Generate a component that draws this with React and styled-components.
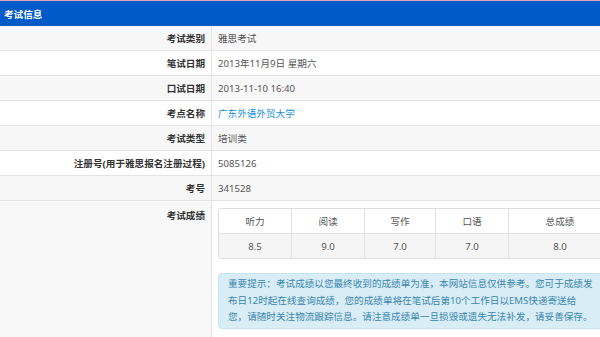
import React from 'react';
import styled, { createGlobalStyle } from 'styled-components';

const GlobalStyle = createGlobalStyle`
    html, body {
        margin: 0;
        padding: 0;
        background: #ffffff;
        overflow: hidden;
    }
    body {
        font-family: "Noto Sans", "Noto Sans CJK SC", sans-serif;
        font-size: 9.6px;
        color: #555;
    }
`;

export const Page = styled.div`
    width: 600px;
    height: 337px;
    overflow: hidden;
    border-top: 1px solid #d9a6b8;
    box-sizing: border-box;
`;

export const Header = styled.div`
    height: 25px;
    background: #005bc8;
    color: #ffffff;
    font-weight: bold;
    display: flex;
    align-items: center;
    padding-left: 4px;
`;

export const Row = styled.div`
    display: flex;
    min-height: 24px;
    border-bottom: 1px solid #e4e4e4;
    background: ${(p) => (p.$striped ? '#f7f7f7' : '#ffffff')};
`;

export const Label = styled.div`
    width: 212px;
    flex-shrink: 0;
    box-sizing: border-box;
    border-right: 1px solid #e4e4e4;
    padding-right: 6px;
    text-align: right;
    font-weight: bold;
    color: #333;
    display: flex;
    justify-content: flex-end;
    align-items: ${(p) => (p.$top ? 'flex-start' : 'center')};
    padding-top: ${(p) => (p.$top ? '7px' : '0')};
    background: ${(p) => (p.$shade ? '#f8f8f8' : 'transparent')};
`;

export const Value = styled.div`
    flex: 1;
    min-width: 0;
    overflow: hidden;
    padding-left: 6px;
    display: flex;
    flex-direction: column;
    justify-content: center;
    color: ${(p) => (p.$link ? '#1a8fd8' : '#555')};
`;

export const ScoreCell = styled.div`
    padding: 7px 0 11px 0;
`;

export const ScoreTable = styled.div`
    width: 392px;
    border: 1px solid #dddddd;
    border-radius: 3px;
    display: grid;
    grid-template-columns: 72px 73px 71px 73px 1fr;
    overflow: hidden;
`;

export const Th = styled.div`
    height: 24px;
    display: flex;
    align-items: center;
    justify-content: center;
    background: #ffffff;
    border-left: ${(p) => (p.$first ? 'none' : '1px solid #e2e2e2')};
    border-bottom: 1px solid #e2e2e2;
`;

export const Td = styled.div`
    height: 24px;
    display: flex;
    align-items: center;
    justify-content: center;
    background: #f5f5f5;
    border-left: ${(p) => (p.$first ? 'none' : '1px solid #e2e2e2')};
`;

export const Notice = styled.div`
    margin-top: 14px;
    width: 400px;
    box-sizing: border-box;
    background: #d9edf7;
    border: 1px solid #c4e4f1;
    border-radius: 4px;
    color: #3a87ad;
    padding: 2px 22px 2px 9px;
    line-height: 16.5px;
`;

const rows = [
    ['考试类别', '雅思考试'],
    ['笔试日期', '2013年11月9日 星期六'],
    ['口试日期', '2013-11-10 16:40'],
    ['考点名称', '广东外语外贸大学', true],
    ['考试类型', '培训类'],
    ['注册号(用于雅思报名注册过程)', '5085126'],
    ['考号', '341528'],
];

const heads = ['听力', '阅读', '写作', '口语', '总成绩'];
const scores = ['8.5', '9.0', '7.0', '7.0', '8.0'];

const App = () => {
    return (
        <>
            <GlobalStyle />
            <Page>
                <Header>考试信息</Header>
                {rows.map(([label, value, link], i) => (
                    <Row key={label} $striped={i % 2 === 0}>
                        <Label>{label}</Label>
                        <Value $link={link}>{value}</Value>
                    </Row>
                ))}
                <Row>
                    <Label $top $shade>考试成绩</Label>
                    <Value>
                        <ScoreCell>
                            <ScoreTable>
                                {heads.map((h, i) => (
                                    <Th key={h} $first={i === 0}>{h}</Th>
                                ))}
                                {scores.map((s, i) => (
                                    <Td key={i} $first={i === 0}>{s}</Td>
                                ))}
                            </ScoreTable>
                            <Notice>
                                重要提示：考试成绩以您最终收到的成绩单为准，本网站信息仅供参考。您可于成绩发布日12时起在线查询成绩，您的成绩单将在笔试后第10个工作日以EMS快递寄送给您，请随时关注物流跟踪信息。请注意成绩单一旦损毁或遗失无法补发，请妥善保存。
                            </Notice>
                        </ScoreCell>
                    </Value>
                </Row>
            </Page>
        </>
    );
};

export default App;
